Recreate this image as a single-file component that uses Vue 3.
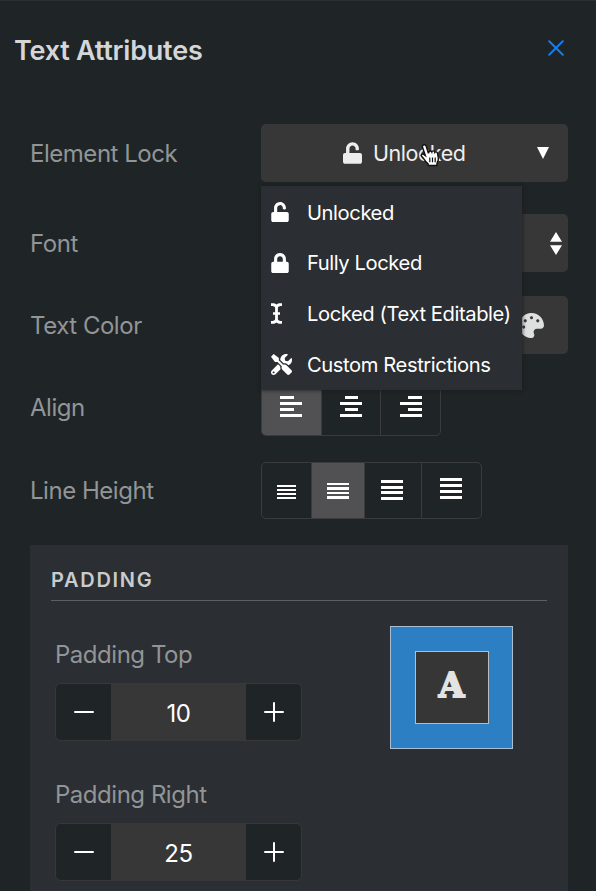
<template>
  <div class="attributes">
    <header class="attributes-header">
      <h2 class="attributes-title">Text Attributes</h2>
      <button class="close-btn" aria-label="Close">
        <svg width="16" height="16" viewBox="0 0 16 16">
          <path d="M1.2 1.2l13.6 13.6M14.8 1.2L1.2 14.8" />
        </svg>
      </button>
    </header>

    <div class="rows">
      <div class="row">
        <span class="label">Element Lock</span>
        <div class="control lock-control">
          <button class="select lock-select" @click="menuOpen = !menuOpen">
            <svg class="icon" width="19" height="22" viewBox="0 0 448 512"><path :d="icons.unlock" /></svg>
            <span class="lock-value">{{ selectedLock }}</span>
            <svg class="caret" width="12" height="12" viewBox="0 0 12 12"><path d="M0 0h12L6 12z" /></svg>
          </button>
          <svg class="pointer" width="20" height="25" viewBox="0 0 20 25">
            <path
              d="M3 2.3C4.2 1 5.9 2 6.3 3.5l1.9 6.3.6-.1c-.1-2 2.2-2.4 3-.7.3-1.5 2.6-1.5 3 .4.6-1 2.4-.6 2.8 1.2l.7 4.4c.2 1.7-.3 3.4-1.2 4.7l-.3 2.8H8.4l-.3-1.7c-2.2-1.5-3.6-3.7-4.8-5.7l-1.9-2c-.8-1.2.5-2.7 2-1.8l2 1.4L2.6 4.6c-.3-.9-.2-1.7.4-2.3z"
            />
            <path class="pointer-lines" d="M9.8 14.5v4.7M12.5 14.5v4.7M15.2 14.5v4.7" />
          </svg>
          <ul v-if="menuOpen" class="menu">
            <li v-for="option in lockOptions" :key="option.label" class="menu-item" @click="pick(option)">
              <span class="menu-icon">
                <svg class="icon" :width="option.width" :height="option.height" :viewBox="option.box">
                  <path :d="icons[option.icon]" />
                </svg>
              </span>
              <span>{{ option.label }}</span>
            </li>
          </ul>
        </div>
      </div>

      <div class="row">
        <span class="label">Font</span>
        <button class="control select font-select">
          <svg class="icon" width="12" height="23" viewBox="0 0 12 23">
            <path d="M6 0l6 9.7H0zM0 13.2h12L6 23z" />
          </svg>
        </button>
      </div>

      <div class="row">
        <span class="label">Text Color</span>
        <button class="control select color-select">
          <svg class="icon" width="25" height="25" viewBox="0 0 512 512"><path :d="icons.palette" /></svg>
        </button>
      </div>

      <div class="row">
        <span class="label">Align</span>
        <div class="group">
          <button
            v-for="side in ['left', 'center', 'right']"
            :key="side"
            class="group-btn align-btn"
            :class="{ active: align === side }"
            @click="align = side"
          >
            <span class="align-icon" :class="'align-' + side"><i></i><i></i><i></i><i></i></span>
          </button>
        </div>
      </div>

      <div class="row">
        <span class="label">Line Height</span>
        <div class="group height-group">
          <button
            v-for="n in 4"
            :key="n"
            class="group-btn"
            :class="['height-' + n, { active: lineHeight === n }]"
            @click="lineHeight = n"
          >
            <span class="height-icon"><i></i><i></i><i></i><i></i></span>
          </button>
        </div>
      </div>
    </div>

    <section class="panel">
      <h3 class="panel-title">PADDING</h3>
      <div class="panel-body">
        <div class="fields">
          <div v-for="field in paddings" :key="field.label" class="field">
            <span class="field-label">{{ field.label }}</span>
            <div class="stepper">
              <button class="step" @click="field.value--">
                <svg width="20" height="20" viewBox="0 0 20 20"><path d="M1 10h18" /></svg>
              </button>
              <span class="step-value">{{ field.value }}</span>
              <button class="step" @click="field.value++">
                <svg width="20" height="20" viewBox="0 0 20 20"><path d="M1 10h18M10 1v18" /></svg>
              </button>
            </div>
          </div>
        </div>
        <div class="preview">
          <div class="preview-inner">A</div>
        </div>
      </div>
    </section>
  </div>
</template>

<script setup>
import { ref } from 'vue';

const menuOpen = ref(true);
const selectedLock = ref('Unlocked');
const align = ref('left');
const lineHeight = ref(2);

const lockOptions = [
  { label: 'Unlocked', icon: 'unlock', width: 18, height: 20, box: '0 0 448 512' },
  { label: 'Fully Locked', icon: 'lock', width: 18, height: 20, box: '0 0 448 512' },
  { label: 'Locked (Text Editable)', icon: 'cursor', width: 11, height: 21, box: '0 0 11 21' },
  { label: 'Custom Restrictions', icon: 'tools', width: 21, height: 21, box: '0 0 512 512' }
];

const paddings = ref([
  { label: 'Padding Top', value: 10 },
  { label: 'Padding Right', value: 25 }
]);

const pick = (option) => {
  selectedLock.value = option.label;
  menuOpen.value = false;
};

const icons = {
  unlock: 'M400 256H152V152.9c0-39.6 31.7-72.5 71.3-72.9 40-.4 72.7 32.1 72.7 72v16c0 13.3 10.7 24 24 24h32c13.3 0 24-10.7 24-24v-16C376 68 307.5-.3 223.5 0 139.5.3 72 69.5 72 153.5V256H48c-26.5 0-48 21.5-48 48v160c0 26.5 21.5 48 48 48h352c26.5 0 48-21.5 48-48V304c0-26.5-21.5-48-48-48z',
  lock: 'M400 224h-24v-72C376 68.2 307.8 0 224 0S72 68.2 72 152v72H48c-26.5 0-48 21.5-48 48v192c0 26.5 21.5 48 48 48h352c26.5 0 48-21.5 48-48V272c0-26.5-21.5-48-48-48zm-104 0H152v-72c0-39.7 32.3-72 72-72s72 32.3 72 72v72z',
  cursor: 'M0 .3C2.5 0 4.5.5 5.5 1.5 6.5.5 8.5 0 11 .3V3C8.5 3 6.9 3.4 6.9 5V9.200H9V11.800H6.900V16C6.900 17.600 8.500 18 11 18V20.700C8.500 21 6.500 20.500 5.500 19.500 4.500 20.500 2.500 21 0 20.700V18C2.500 18 4.100 17.600 4.100 16V11.800H2V9.200H4.100V5C4.100 3.400 2.500 3 0 3z',
  tools: 'M501.1 395.7L384 278.6c-23.1-23.1-57.6-27.6-85.4-13.9L192 158.1V96L64 0 0 64l96 128h62.1l106.6 106.6c-13.6 27.8-9.2 62.3 13.9 85.4l117.1 117.1c14.6 14.6 38.2 14.6 52.7 0l52.7-52.7c14.5-14.6 14.5-38.2 0-52.7zM331.7 225c28.3 0 54.9 11 74.9 31l19.4 19.4c15.8-6.9 30.8-16.5 43.8-29.5 37.1-37.1 49.7-89.3 37.9-136.7-2.2-9-13.5-12.1-20.1-5.5l-74.4 74.4-67.9-11.3L334 98.9l74.4-74.4c6.6-6.6 3.4-17.9-5.7-20.2-47.4-11.7-99.6.9-136.6 37.9-28.5 28.5-41.9 66.1-41.2 103.6l82.1 82.1c8.1-1.9 16.5-2.9 24.7-2.9zm-103.9 82l-56.7-56.7L18.7 402.8c-25 25-25 65.5 0 90.5s65.5 25 90.5 0l123.6-123.6c-7.6-19.9-9.9-41.6-5-62.7zM64 472c-13.2 0-24-10.8-24-24 0-13.3 10.7-24 24-24s24 10.7 24 24c0 13.2-10.7 24-24 24z',
  palette: 'M204.3 5C104.9 24.4 24.8 104.3 5.2 203.4c-37 187 131.7 326.4 258.8 306.7 41.2-6.4 61.4-54.6 42.5-91.7-23.1-45.4 9.9-98.4 60.9-98.4h79.7c35.8 0 64.8-29.6 64.9-65.3C511.5 97.1 368.1-26.9 204.3 5zM96 320c-17.7 0-32-14.3-32-32s14.3-32 32-32 32 14.3 32 32-14.3 32-32 32zm32-128c-17.7 0-32-14.3-32-32s14.3-32 32-32 32 14.3 32 32-14.3 32-32 32zm128-64c-17.7 0-32-14.3-32-32s14.3-32 32-32 32 14.3 32 32-14.3 32-32 32zm128 64c-17.7 0-32-14.3-32-32s14.3-32 32-32 32 14.3 32 32-14.3 32-32 32z'
};
</script>

<style>
  body {
    margin: 0;
    background: #1f2426;
  }
</style>

<style scoped>
  .attributes {
    box-sizing: border-box;
    height: 891px;
    overflow: hidden;
    border-top: 1px solid #2d3033;
    background: #1f2426;
    color: #fff;
    font-family: Inter, 'Liberation Sans', sans-serif;
  }

  .attributes button {
    padding: 0;
    border: none;
    font: inherit;
    color: inherit;
    cursor: pointer;
  }

  svg {
    display: block;
  }

  .icon {
    fill: currentColor;
  }

  .attributes-header {
    display: flex;
    align-items: center;
    justify-content: space-between;
    height: 98px;
    padding: 0 32px 0 14px;
  }

  .attributes-title {
    margin: 0;
    font-size: 27px;
    font-weight: 600;
    letter-spacing: -0.23px;
    color: #d4d6d7;
  }

  .close-btn {
    background: none;
    margin-top: -4px;
  }

  .close-btn svg {
    fill: none;
    stroke: #147df0;
    stroke-width: 2;
    stroke-linecap: round;
  }

  .rows {
    display: grid;
    grid-template-rows: 66px 58px 58px 58px 60px;
    row-gap: 24px;
    padding: 25px 28px 0 30px;
  }

  .row {
    display: grid;
    grid-template-columns: 231px 307px;
    align-items: center;
  }

  .row:first-child {
    padding-bottom: 8px;
  }

  .label, .field-label {
    font-size: 24px;
    letter-spacing: -0.47px;
    color: #919596;
    white-space: nowrap;
  }

  .control {
    height: 58px;
  }

  .lock-control {
    position: relative;
  }

  .select {
    display: flex;
    align-items: center;
    width: 100%;
    border-radius: 5px;
    background: #383737;
  }

  .lock-select {
    height: 58px;
  }

  .lock-select .icon {
    margin-left: 82px;
    color: #eceeee;
  }

  .lock-value {
    margin-left: 11px;
    font-size: 21.5px;
    letter-spacing: -0.45px;
    color: #eceeee;
  }

  .caret {
    margin-left: auto;
    margin-right: 19px;
    fill: #fff;
  }

  .pointer {
    position: absolute;
    left: 159px;
    top: 19px;
    fill: #fff;
    stroke: #111;
    stroke-width: 1.4;
  }

  .pointer-lines {
    stroke-width: 1.2;
  }

  .menu {
    position: absolute;
    z-index: 2;
    top: 62px;
    left: 0;
    box-sizing: border-box;
    width: 261px;
    height: 204px;
    margin: 0;
    padding: 1px 0 0 10px;
    background: #2b2e32;
    box-shadow: 0 0 4px #17191b;
    list-style: none;
  }

  .menu-item {
    display: flex;
    align-items: center;
    height: 50.6px;
    font-size: 20.2px;
    letter-spacing: -0.42px;
    white-space: nowrap;
    cursor: pointer;
  }

  .menu-icon {
    flex: 0 0 36px;
  }

  .font-select {
    justify-content: flex-end;
    padding-right: 6px !important;
  }

  .color-select {
    justify-content: flex-end;
    padding-right: 24px !important;
    color: #dedfdf !important;
  }

  .group {
    display: flex;
    box-sizing: border-box;
    width: 180px;
    height: 58px;
    border: 1px solid #3b3b3b;
    border-radius: 5px;
    overflow: hidden;
  }

  .group-btn {
    display: flex;
    align-items: center;
    justify-content: center;
    background: none;
  }

  .group-btn + .group-btn {
    border-left: 1px solid #3b3b3b !important;
  }

  .group-btn.active {
    background: #515153;
  }

  .align-btn {
    flex: 1;
    padding-bottom: 1px !important;
  }

  .align-icon {
    display: flex;
    flex-direction: column;
    gap: 3px;
    width: 22px;
  }

  .align-icon i, .height-icon i {
    display: block;
    height: 3px;
    background: #fff;
  }

  .align-icon i:nth-child(odd) {
    width: 14px;
  }

  .align-center i:nth-child(odd) {
    width: 13px;
    align-self: center;
  }

  .align-right i:nth-child(odd) {
    align-self: flex-end;
  }

  .height-group {
    width: 221px;
    height: 57px;
  }

  .height-icon {
    display: grid;
    width: 22px;
    row-gap: 2px;
  }

  .height-1 {
    width: 49px;
    padding-top: 4px !important;
  }

  .height-1 .height-icon {
    width: 19px;
  }

  .height-1 i {
    height: 2px;
  }

  .height-2 {
    width: 53px;
    padding-top: 2px !important;
  }

  .height-2 .height-icon {
    row-gap: 2px;
  }

  .height-2 i {
    height: 2px;
  }

  .height-2 i:nth-child(even) {
    height: 3px;
  }

  .height-3 {
    width: 57px;
    padding-right: 2px !important;
  }

  .height-3 .height-icon {
    row-gap: 2.4px;
  }

  .height-4 {
    flex: 1;
    padding-right: 2px !important;
    padding-bottom: 4px !important;
  }

  .height-4 .height-icon {
    row-gap: 3px;
  }

  .panel {
    box-sizing: border-box;
    width: 538px;
    height: 360px;
    margin: 25px 0 0 30px;
    padding: 19px 21px 0;
    background: #2b2e32;
  }

  .panel-title {
    height: 36px;
    margin: 0;
    border-bottom: 1px solid #5f6062;
    font-size: 20px;
    font-weight: 600;
    line-height: 32px;
    letter-spacing: 1.7px;
    color: #c9cbcd;
  }

  .panel-body {
    display: flex;
    justify-content: space-between;
    padding: 25px 34px 0 4px;
  }

  .field {
    height: 140px;
  }

  .field-label {
    display: block;
    padding-top: 14px;
    line-height: 30px;
  }

  .stepper {
    display: flex;
    box-sizing: border-box;
    width: 247px;
    height: 58px;
    margin-top: 13px;
    border: 1px solid #383838;
    border-radius: 6px;
    overflow: hidden;
  }

  .step {
    display: flex;
    align-items: center;
    justify-content: center;
    width: 55px;
    background: #1f2426;
  }

  .step svg {
    fill: none;
    stroke: #fff;
    stroke-width: 2;
    stroke-linecap: round;
  }

  .step-value {
    flex: 1;
    background: #383737;
    font-size: 24px;
    letter-spacing: -0.4px;
    line-height: 59px;
    text-align: center;
  }

  .preview {
    display: flex;
    align-items: center;
    justify-content: center;
    box-sizing: border-box;
    width: 123px;
    height: 123px;
    border: 1px solid #a9bfd0;
    background: #2d7fc3;
  }

  .preview-inner {
    box-sizing: border-box;
    width: 74px;
    height: 73px;
    border: 1px solid #b9bdc0;
    background: #363636;
    color: #e3e3e3;
    font-family: 'DejaVu Serif', serif;
    font-size: 33px;
    font-weight: 700;
    line-height: 68px;
    text-align: center;
    -webkit-text-stroke: 1.8px #e3e3e3;
  }
</style>
